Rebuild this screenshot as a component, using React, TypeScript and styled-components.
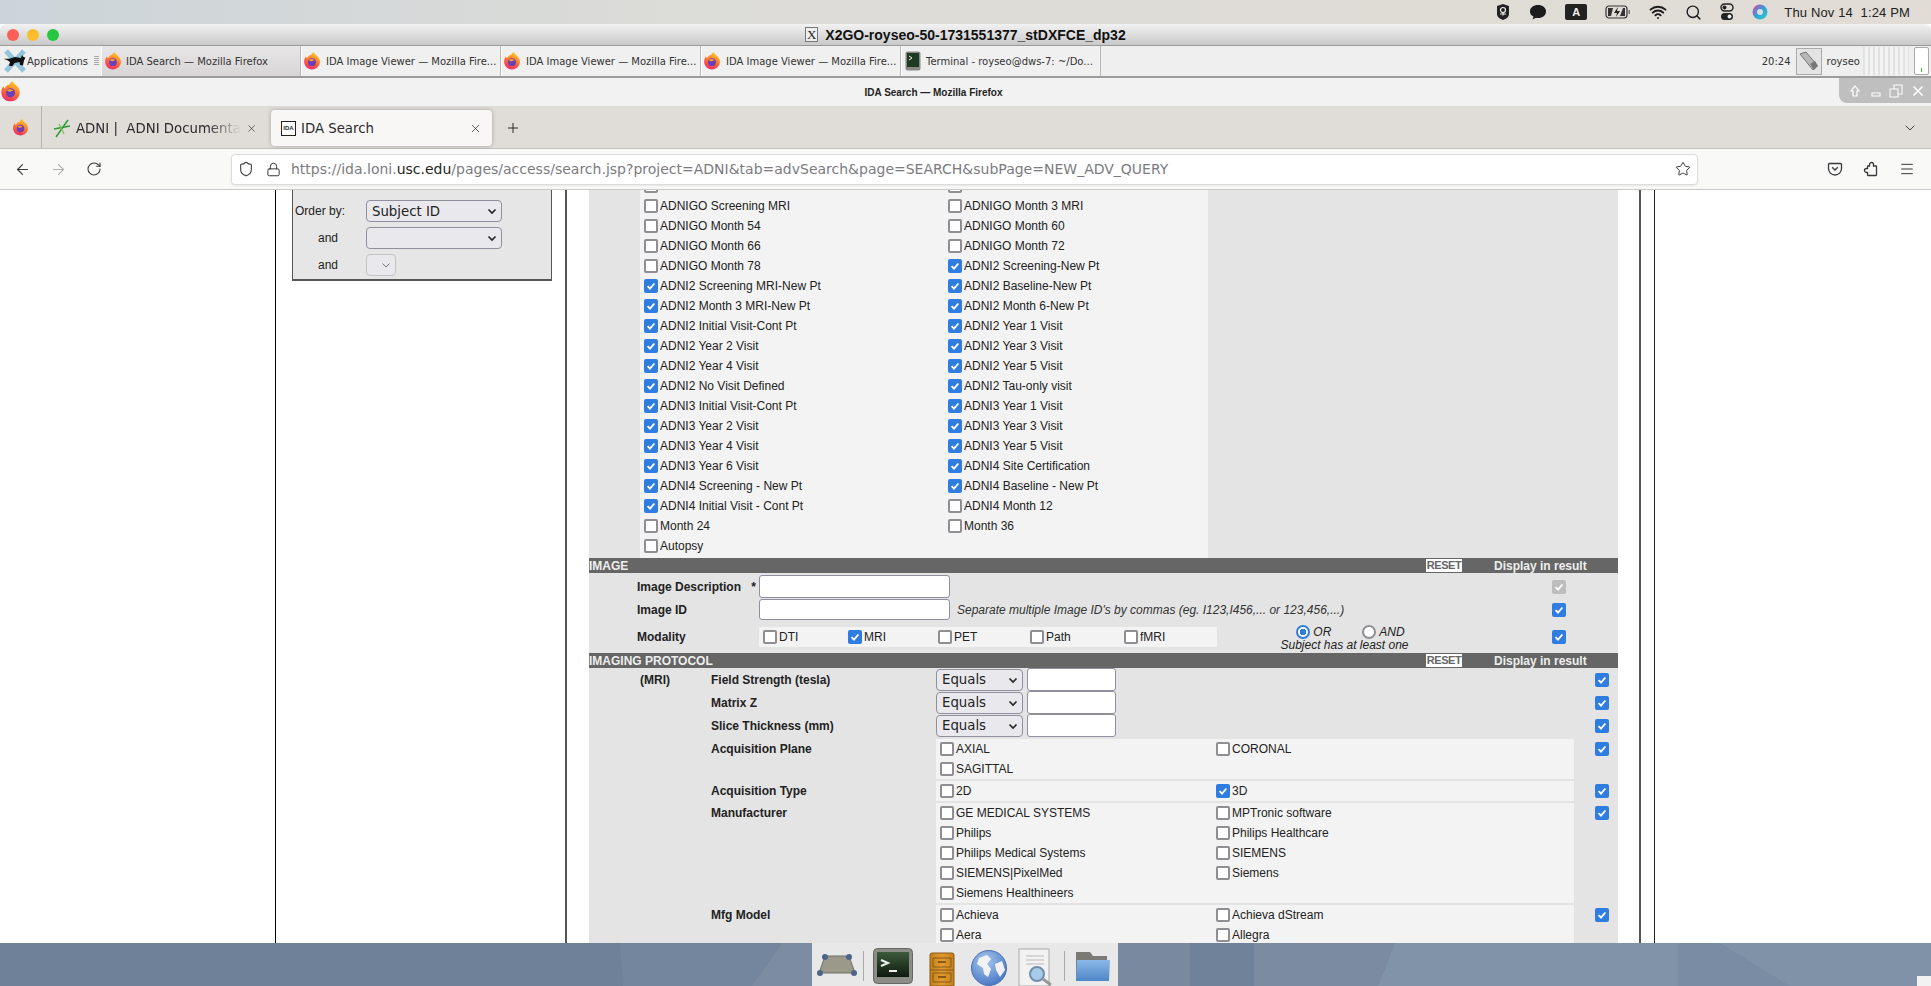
import React from 'react'
import styled, { createGlobalStyle } from 'styled-components'
import { ArrowLeft, ArrowRight, ChevronDown, Lock, Menu, Plus, RotateCw, Search, Shield, Star, Wifi, X } from 'lucide-react'

const GlobalStyle = createGlobalStyle`
  html, body {
    margin: 0;
    padding: 0;
    background: #fff;
    overflow: hidden;
  }
  * {
    box-sizing: border-box;
  }
`

const Screen = styled.div`
  width: 1931px;
  height: 986px;
  display: flex;
  flex-direction: column;
  overflow: hidden;
  font-family: 'Liberation Sans', Arial, sans-serif;
  font-size: 12px;
  color: #222;
`

/* mac menu bar */
const MacBar = styled.div`
  height: 24px;
  flex: none;
  display: flex;
  align-items: center;
  justify-content: flex-end;
  padding-right: 21px;
  background: linear-gradient(90deg, #ccd4d9 0%, #dcdcd8 35%, #e1dcd5 100%);
  color: #222;
  font-family: 'Liberation Sans', sans-serif;
  font-size: 13px;
  letter-spacing: 0.15px;
`

const MacIcons = styled.div`
  display: flex;
  align-items: center;
  gap: 18px;
  margin-right: 16px;
  color: #1c1c1c;
`

const KeyBadge = styled.span`
  width: 22px;
  height: 16px;
  border-radius: 2px;
  background: #222;
  color: #eee;
  font-size: 11px;
  font-weight: bold;
  display: flex;
  align-items: center;
  justify-content: center;
`

/* x2go window title */
const X2goTitle = styled.div`
  height: 21px;
  flex: none;
  display: flex;
  align-items: center;
  position: relative;
  justify-content: center;
  gap: 7px;
  background: linear-gradient(#f2f2f2, #c9c9c9);
  border-top-left-radius: 6px;
  border-top-right-radius: 6px;
  font-weight: bold;
  font-size: 14px;
  color: #111;
`

const Lights = styled.div`
  position: absolute;
  left: 7px;
  top: 5px;
  display: flex;
  gap: 8px;
`

const Light = styled.span<{ $c: string }>`
  width: 12px;
  height: 12px;
  border-radius: 50%;
  background: ${p => p.$c};
`

const XBadge = styled.span`
  width: 13px;
  height: 15px;
  background: #eee;
  border: 1px solid #777;
  font-family: 'Liberation Serif', serif;
  font-weight: normal;
  font-size: 13px;
  line-height: 13px;
  text-align: center;
  color: #222;
`

/* xfce panel */
const Panel = styled.div`
  height: 33px;
  flex: none;
  display: flex;
  align-items: stretch;
  background: #efefef;
  border-top: 1px solid #9a9a9a;
  border-bottom: 2px solid #9c9c9c;
  font-family: 'DejaVu Sans', sans-serif;
  font-size: 10px;
  color: #333;
`

const AppsButton = styled.div`
  width: 101px;
  display: flex;
  align-items: center;
  gap: 0;
  padding-left: 3px;
  position: relative;
`

const AppsHandle = styled.span`
  position: absolute;
  right: 2px;
  top: 10px;
  width: 5px;
  height: 10px;
  background: repeating-linear-gradient(#aaa 0 1px, transparent 1px 2px);
`

const WinTab = styled.div<{ $active?: boolean; $w?: number }>`
  width: ${p => p.$w ?? 200}px;
  display: flex;
  align-items: center;
  gap: ${p => (p.$active ? 4 : 5)}px;
  padding-left: ${p => (p.$active ? 2 : 1)}px;
  white-space: nowrap;
  overflow: hidden;
  border-right: 1px solid #b9b9b9;
  border-left: 1px solid #fff;
  background: ${p => (p.$active ? 'linear-gradient(#e8e6e6, #d7d5d5)' : '#f0f0f0')};
`

const PanelRight = styled.div`
  margin-left: auto;
  display: flex;
  align-items: center;
  gap: 5px;
  padding-right: 2px;
`

const Hatch = styled.div`
  width: 46px;
  height: 28px;
  margin-left: -2px;
  background: repeating-linear-gradient(90deg, #e2e2e2 0 2px, #f3f3f3 2px 5px);
`

const Meter = styled.div`
  width: 15px;
  height: 28px;
  background: #fff;
  border: 1px solid #aaa;
  border-radius: 2px;
  display: flex;
  align-items: flex-end;
  justify-content: center;
  padding-bottom: 2px;
  &::after {
    content: '';
    width: 1px;
    height: 4px;
    background: #22d822;
  }
`

const NetIcon = styled.div`
  width: 26px;
  height: 27px;
  border: 1px solid #aaa;
  display: flex;
  align-items: center;
  justify-content: center;
  background: #e4e4e4;
`

/* firefox window */
const FoxTitle = styled.div`
  height: 28px;
  flex: none;
  position: relative;
  display: flex;
  align-items: center;
  justify-content: center;
  background: #f2f2f2;
  font-size: 10px;
  font-weight: bold;
  color: #222;
  padding-right: 64px;
`

const FoxTitleIcon = styled.div`
  position: absolute;
  left: 0;
  top: 3px;
`

const WinButtons = styled.div`
  position: absolute;
  right: 0;
  top: 0;
  width: 92px;
  height: 25px;
  display: flex;
  align-items: center;
  justify-content: space-around;
  padding: 0 2px 0 6px;
  background: #bfbfbf;
  border-bottom-left-radius: 8px;
  color: #fff;
`

const TabStrip = styled.div`
  height: 43px;
  flex: none;
  display: flex;
  align-items: center;
  padding-top: 2px;
  background: #e0ddd8;
  border-bottom: 1px solid #c4c2be;
  font-family: 'DejaVu Sans', sans-serif;
  font-size: 13.3px;
  color: #2a2a2e;
`

const FoxButton = styled.div`
  width: 42px;
  align-self: stretch;
  margin-top: -2px;
  display: flex;
  align-items: center;
  justify-content: center;
  border-right: 1px solid #b4b2ae;
`

const BrowserTab = styled.div<{ $active?: boolean; $first?: boolean }>`
  width: ${p => (p.$first ? 220 : 221)}px;
  height: 36px;
  flex: none;
  display: flex;
  align-items: center;
  gap: 5px;
  padding: ${p => (p.$first ? '0 6px 0 10px' : '0 10px')};
  margin-left: ${p => (p.$first ? 1 : 8)}px;
  border-radius: 4px;
  white-space: nowrap;
  overflow: hidden;
  background: ${p => (p.$active ? '#f8f7f5' : 'transparent')};
  box-shadow: ${p => (p.$active ? '0 0 4px rgba(0,0,0,.25)' : 'none')};
`

const FadedTitle = styled.span`
  flex: 1;
  white-space: nowrap;
  mask-image: linear-gradient(90deg, #000 80%, transparent 100%);
`

const TabTitle = styled.span`
  flex: 1;
`

const IdaIcon = styled.span`
  width: 15px;
  height: 15px;
  background: #fff;
  border: 1px solid #222;
  font-family: 'Liberation Sans', sans-serif;
  font-size: 6px;
  font-weight: bold;
  display: flex;
  align-items: center;
  justify-content: center;
  flex: none;
`

const NewTab = styled.div`
  margin-left: 13px;
  display: flex;
`

const StripEnd = styled.div`
  margin-left: auto;
  padding-right: 13px;
  display: flex;
`

const NavBar = styled.div`
  height: 41px;
  flex: none;
  display: flex;
  align-items: center;
  background: #f9f9f8;
  border-bottom: 1px solid #c9c9c9;
  color: #3a3a3e;
`

const NavButtons = styled.div`
  width: 231px;
  display: flex;
  gap: 19px;
  padding-left: 14px;
`

const UrlField = styled.div`
  width: 1467px;
  height: 31px;
  display: flex;
  align-items: center;
  gap: 12px;
  background: #fff;
  border: 1px solid #dcdcdc;
  border-radius: 4px;
  box-shadow: 0 1px 2px rgba(0, 0, 0, 0.08);
  padding: 0 6px 0 6px;
`

const UrlText = styled.span`
  flex: 1;
  margin-left: -2px;
  font-family: 'DejaVu Sans', sans-serif;
  font-size: 14px;
  color: #7b7b7f;
  white-space: nowrap;
  overflow: hidden;
`

const UrlDomain = styled.span`
  color: #1f1f22;
`

const NavRight = styled.div`
  margin-left: auto;
  display: flex;
  gap: 20px;
  padding-right: 16px;
`

/* page */
const Viewport = styled.div`
  flex: 1;
  min-height: 0;
  overflow: hidden;
  display: flex;
  padding-left: 275px;
  background: #fff;
`

const SideColumn = styled.div`
  width: 292px;
  flex: none;
  border-left: 1px solid #000;
  border-right: 2px solid #555;
  padding-left: 16px;
`

const OrderPanel = styled.div`
  width: 260px;
  height: 91px;
  background: #e6e6e6;
  border-left: 1px solid #555;
  border-right: 1px solid #555;
  border-bottom: 2px solid #555;
  display: grid;
  grid-template-columns: 73px 1fr;
  align-content: start;
  row-gap: 5px;
  padding-top: 10px;
`

const OrderLabel = styled.div<{ $indent?: boolean }>`
  display: flex;
  align-items: center;
  padding-left: ${p => (p.$indent ? 25 : 2)}px;
  color: #222;
`

const Select = styled.div<{ $w: number; $disabled?: boolean }>`
  width: ${p => p.$w}px;
  height: 22px;
  display: flex;
  align-items: center;
  justify-content: space-between;
  padding: 0 4px 0 5px;
  background: #e9e9ed;
  border: 1px solid ${p => (p.$disabled ? '#c4c4c8' : '#8f8f9d')};
  border-radius: 4px;
  font-family: 'DejaVu Sans', sans-serif;
  font-size: 13.3px;
  color: ${p => (p.$disabled ? '#888' : '#222')};
`

const MainGray = styled.div`
  width: 1029px;
  flex: none;
  margin-left: 22px;
  background: #e4e4e4;
`

const OuterRule = styled.div`
  width: 16px;
  flex: none;
  margin-left: 21px;
  border-left: 2px solid #555;
  border-right: 1px solid #222;
`

const VisitGrid = styled.div`
  margin-left: 51px;
  width: 568px;
  margin-top: -14px;
  background: #f3f3f3;
  display: grid;
  grid-template-columns: 304px 1fr;
  grid-auto-rows: 20px;
  padding-bottom: 2px;
`

const Check = styled.label<{ $pad?: number }>`
  display: flex;
  align-items: center;
  gap: 2px;
  padding-left: ${p => p.$pad ?? 4}px;
  white-space: nowrap;
  color: #222;
`

const Box = styled.span<{ $on?: boolean; $dim?: boolean }>`
  width: 14px;
  height: 14px;
  flex: none;
  display: flex;
  align-items: center;
  justify-content: center;
  border-radius: 2px;
  border: ${p => (p.$on || p.$dim ? 'none' : '2px solid #8f8f93')};
  background: ${p => (p.$dim ? '#bdbdbd' : p.$on ? '#2f7de1' : '#fff')};
`

const SectionBar = styled.div`
  height: 15px;
  display: flex;
  align-items: center;
  background: #666;
  color: #eee;
  font-weight: bold;
  font-size: 12px;
  position: relative;
`

const SectionName = styled.span`
  flex: 1;
`

const ResetButton = styled.span`
  width: 36px;
  height: 13px;
  margin-right: 32px;
  background: #fff;
  color: #666;
  font-size: 11px;
  font-weight: bold;
  line-height: 13px;
  text-align: center;
  letter-spacing: -0.4px;
`

const DisplayLabel = styled.span`
  width: 124px;
`

const ImageRow = styled.div<{ $h: number; $pt?: number }>`
  height: ${p => p.$h}px;
  padding-top: ${p => p.$pt ?? 0}px;
  display: grid;
  grid-template-columns: 48px 122px 191px 602px 1fr;
  align-items: center;
`

const FieldLabel = styled.span`
  font-weight: bold;
  color: #222;
  white-space: nowrap;
  display: flex;
  justify-content: space-between;
  padding-right: 3px;
`

const TextInput = styled.div<{ $w?: number; $h?: number }>`
  width: ${p => p.$w ?? 191}px;
  height: ${p => p.$h ?? 23}px;
  background: #fff;
  border: 1px solid #8f8f9d;
  border-radius: 3px;
`

const Hint = styled.span`
  font-style: italic;
  padding-left: 7px;
  color: #333;
`

const ModalityStrip = styled.div`
  grid-column: 3 / span 2;
  display: flex;
  align-items: stretch;
  height: 100%;
`

const ModalityBoxes = styled.div`
  width: 458px;
  height: 20px;
  margin-top: 7px;
  background: #f3f3f3;
  display: flex;
`

const ModalityItem = styled.div<{ $w: number }>`
  width: ${p => p.$w}px;
  display: flex;
`

const Logic = styled.div`
  margin-left: 60px;
  width: 135px;
  text-align: center;
  font-style: italic;
  color: #222;
  line-height: 13px;
  padding-top: 5px;
`

const RadioRow = styled.div`
  display: flex;
  justify-content: center;
  gap: 31px;
  padding-left: 12px;
`

const RadioItem = styled.span`
  display: flex;
  align-items: center;
  gap: 3px;
`

const Radio = styled.span<{ $on?: boolean }>`
  width: 14px;
  height: 14px;
  border-radius: 50%;
  background: ${p => (p.$on ? '#2f7de1' : '#8f8f93')};
  padding: 2px;
  display: flex;
  &::after {
    content: '';
    flex: 1;
    border-radius: 50%;
    background: ${p => (p.$on ? 'radial-gradient(#2f7de1 0 3px, #fff 3.5px)' : '#fff')};
  }
`

const CheckCell = styled.div`
  display: flex;
`

const ProtoRow = styled.div<{ $h: number; $gap?: number }>`
  height: ${p => p.$h}px;
  margin-top: ${p => p.$gap ?? 0}px;
  display: grid;
  grid-template-columns: 51px 71px 225px 638px 1fr;
`

const ProtoLabel = styled.div<{ $h?: number }>`
  height: ${p => p.$h ?? 20}px;
  display: flex;
  align-items: center;
  font-weight: bold;
`

const SelectPair = styled.div`
  display: flex;
  gap: 4px;
  align-items: center;
`

const OptionGrid = styled.div`
  background: #f3f3f3;
  display: grid;
  grid-template-columns: 276px 1fr;
  grid-auto-rows: 20px;
`

const RightCheck = styled.div<{ $h?: number }>`
  height: ${p => p.$h ?? 20}px;
  display: flex;
  align-items: center;
  padding-left: 21px;
`

/* dock */
const DockArea = styled.div`
  height: 43px;
  flex: none;
  position: relative;
  display: flex;
  justify-content: center;
  background: #6e8199;
  overflow: hidden;
`

const Wallpaper = styled.svg`
  position: absolute;
  inset: 0;
`

const ResizeGrip = styled.span`
  position: absolute;
  right: 0;
  bottom: 0;
  width: 14px;
  height: 10px;
  background: #f2f2f2;
`

const Dock = styled.div`
  position: relative;
  width: 306px;
  margin-left: -1px;
  display: flex;
  align-items: stretch;
  background: #e8e8e8;
  padding-left: 5px;
`

const DockItem = styled.div<{ $w: number; $b?: number }>`
  width: ${p => p.$w}px;
  height: 100%;
  display: flex;
  align-items: flex-end;
  justify-content: center;
  padding-bottom: ${p => p.$b ?? 0}px;
`

const DockSep = styled.span<{ $l: number; $r: number }>`
  width: 1px;
  height: 30px;
  margin: 0 ${p => p.$r}px 5px ${p => p.$l}px;
  background: #aaa;
  flex: none;
  align-self: flex-end;
`

const Fox: React.FC<{ size?: number }> = ({ size = 16 }) => (
  <svg width={size} height={size} viewBox="0 0 32 32" style={{ flex: 'none' }}>
    <defs>
      <linearGradient id="foxGrad" x1="0.7" y1="0" x2="0.3" y2="1">
        <stop offset="0" stopColor="#ffd02c" />
        <stop offset="0.45" stopColor="#ff7a2a" />
        <stop offset="1" stopColor="#ee2a6a" />
      </linearGradient>
    </defs>
    <path d="M16 31C7.500 31 2 24.500 2 17c0-4 1.500-7.500 3.500-9.500 0 2 .8 3.300 1.800 3.800C8.500 7.500 12 5.500 15 5c-.5-1.500 1-4 5-4.500-.5 2 2 4 4.500 6C28 9.500 30 13 30 17c0 8-6 14-14 14z" fill="url(#foxGrad)" />
    <circle cx="16" cy="18" r="7" fill="#6b3fb5" />
    <path d="M10 14c3-2 8-2 11 1-2-.5-3.500 0-4 1-1 .5-4 .5-7-2z" fill="#ff9a3a" />
  </svg>
)

const Tick: React.FC = () => (
  <svg width="10" height="10" viewBox="0 0 10 10">
    <path d="M1.600 5.200 4 7.700l4.400-5.200" fill="none" stroke="#fff" strokeWidth="1.800" />
  </svg>
)

const CheckBox: React.FC<{ on?: boolean; dim?: boolean }> = ({ on, dim }) => (
  <Box $on={on} $dim={dim}>{(on || dim) && <Tick />}</Box>
)

const Option: React.FC<{ label: string; on?: boolean; pad?: number }> = ({ label, on, pad }) => (
  <Check $pad={pad}>
    <CheckBox on={on} />
    {label}
  </Check>
)

const Chevron: React.FC<{ light?: boolean }> = ({ light }) => (
  <svg width="10" height="10" viewBox="0 0 10 10">
    <path d="M1.500 3.500 5 7l3.500-3.500" fill="none" stroke={light ? '#777' : '#222'} strokeWidth={light ? 1 : 1.600} />
  </svg>
)

const Pocket: React.FC = () => (
  <svg width="16" height="16" viewBox="0 0 16 16" fill="none" stroke="currentColor" strokeWidth="1.300">
    <path d="M2.500 2.500h11a1 1 0 0 1 1 1v4a6.500 6.500 0 0 1-13 0v-4a1 1 0 0 1 1-1z" />
    <path d="M5.200 6.300 8 9l2.800-2.700" />
  </svg>
)

const Extension: React.FC = () => (
  <svg width="16" height="16" viewBox="0 0 16 16" fill="none" stroke="currentColor" strokeWidth="1.300">
    <path d="M6.500 5V3.500a2 2 0 0 1 4 0V5H13a.5.5 0 0 1 .5.5V14a.5.5 0 0 1-.5.5H5a.5.5 0 0 1-.5-.5v-2.500h-1a2 2 0 0 1 0-4h1V5.500A.5.5 0 0 1 5 5z" />
  </svg>
)

const visits: [string, boolean][] = [
  ['', false], ['', false],
  ['ADNIGO Screening MRI', false], ['ADNIGO Month 3 MRI', false],
  ['ADNIGO Month 54', false], ['ADNIGO Month 60', false],
  ['ADNIGO Month 66', false], ['ADNIGO Month 72', false],
  ['ADNIGO Month 78', false], ['ADNI2 Screening-New Pt', true],
  ['ADNI2 Screening MRI-New Pt', true], ['ADNI2 Baseline-New Pt', true],
  ['ADNI2 Month 3 MRI-New Pt', true], ['ADNI2 Month 6-New Pt', true],
  ['ADNI2 Initial Visit-Cont Pt', true], ['ADNI2 Year 1 Visit', true],
  ['ADNI2 Year 2 Visit', true], ['ADNI2 Year 3 Visit', true],
  ['ADNI2 Year 4 Visit', true], ['ADNI2 Year 5 Visit', true],
  ['ADNI2 No Visit Defined', true], ['ADNI2 Tau-only visit', true],
  ['ADNI3 Initial Visit-Cont Pt', true], ['ADNI3 Year 1 Visit', true],
  ['ADNI3 Year 2 Visit', true], ['ADNI3 Year 3 Visit', true],
  ['ADNI3 Year 4 Visit', true], ['ADNI3 Year 5 Visit', true],
  ['ADNI3 Year 6 Visit', true], ['ADNI4 Site Certification', true],
  ['ADNI4 Screening - New Pt', true], ['ADNI4 Baseline - New Pt', true],
  ['ADNI4 Initial Visit - Cont Pt', true], ['ADNI4 Month 12', false],
  ['Month 24', false], ['Month 36', false],
  ['Autopsy', false],
]

const modalities: [string, number, boolean][] = [
  ['DTI', 85, false], ['MRI', 90, true], ['PET', 92, false], ['Path', 94, false], ['fMRI', 90, false],
]

const App: React.FC = () => {
  return (
    <Screen>
      <GlobalStyle />
      <MacBar>
        <MacIcons>
          <svg width="16" height="18" viewBox="0 0 16 18">
            <path d="M8 1l6 2v8c0 3-3 5-6 6-3-1-6-3-6-6V3z" fill="#222" />
            <circle cx="8" cy="7" r="2.500" fill="none" stroke="#eee" strokeWidth="1.200" />
            <path d="M5 11h6M8 9.500v3" stroke="#eee" strokeWidth="1.200" />
          </svg>
          <svg width="18" height="18" viewBox="0 0 18 18">
            <path d="M9 2c4.500 0 8 2.500 8 6.500S13.500 15 9 15c-.8 0-1.500 0-2-.2L3.500 16.500 4.500 13.500C2 12.500 1 10.500 1 8.500 1 4.500 4.500 2 9 2z" fill="#1c1c1c" />
          </svg>
          <KeyBadge>A</KeyBadge>
          <svg width="26" height="14" viewBox="0 0 26 14">
            <rect x="1" y="1" width="21" height="12" rx="3" fill="none" stroke="#333" strokeWidth="1.200" />
            <path d="M3 3h5l-2 8H3zM18 3h2v8h-5z" fill="#333" />
            <path d="M13 2 9 8h3l-1 4 4-6h-3z" fill="#222" />
            <rect x="23.500" y="5" width="1.500" height="4" fill="#777" />
          </svg>
          <Wifi size={18} strokeWidth={2.600} />
          <Search size={17} strokeWidth={2} />
          <svg width="14" height="18" viewBox="0 0 14 18">
            <rect x="1" y="1" width="12" height="7" rx="3.500" fill="none" stroke="#222" strokeWidth="1.400" />
            <circle cx="4.500" cy="4.500" r="2" fill="#222" />
            <rect x="1" y="10" width="12" height="7" rx="3.500" fill="#222" />
            <circle cx="9.500" cy="13.500" r="2" fill="#eee" />
          </svg>
          <svg width="16" height="16" viewBox="0 0 16 16">
            <defs>
              <linearGradient id="siriGrad" x1="0" y1="0" x2="1" y2="1">
                <stop offset="0" stopColor="#e0409a" />
                <stop offset="0.5" stopColor="#30a0e0" />
                <stop offset="1" stopColor="#30d0c0" />
              </linearGradient>
            </defs>
            <circle cx="8" cy="8" r="7.500" fill="url(#siriGrad)" />
            <circle cx="8" cy="8" r="3" fill="#ddd" />
          </svg>
        </MacIcons>
        <span>Thu Nov 14&nbsp;&nbsp;1:24 PM</span>
      </MacBar>

      <X2goTitle>
        <Lights>
          <Light $c="#fb5f57" />
          <Light $c="#fcbc2e" />
          <Light $c="#29c73f" />
        </Lights>
        <XBadge>X</XBadge>
        X2GO-royseo-50-1731551377_stDXFCE_dp32
      </X2goTitle>

      <Panel>
        <AppsButton>
          <svg width="24" height="26" viewBox="0 0 24 26" style={{ flex: 'none' }}>
            <path d="M3 3l18 20M21 3 3 23" stroke="#94c4dc" strokeWidth="5" />
            <path d="M1 11c2-1 4 .5 6-.5l5-1.500 6 1 1-3 1.500 2 2 .5-1.500 3-1 5-3-.5-.5-3-5 1-2 3H6l1-4-3-2z" fill="#111" />
          </svg>
          Applications
          <AppsHandle />
        </AppsButton>
        <WinTab $active>
          <Fox size={18} />
          IDA Search — Mozilla Firefox
        </WinTab>
        <WinTab>
          <Fox size={18} />
          IDA Image Viewer — Mozilla Fire...
        </WinTab>
        <WinTab>
          <Fox size={18} />
          IDA Image Viewer — Mozilla Fire...
        </WinTab>
        <WinTab>
          <Fox size={18} />
          IDA Image Viewer — Mozilla Fire...
        </WinTab>
        <WinTab>
          <svg width="16" height="20" viewBox="0 0 16 20" style={{ marginLeft: 2 }}>
            <rect x="0.500" y="0.500" width="15" height="19" rx="2" fill="#8a8a85" />
            <rect x="2" y="2" width="12" height="14" fill="#1f3a22" />
            <path d="M4 5l3 2-3 2" fill="none" stroke="#eee" strokeWidth="1" />
          </svg>
          Terminal - royseo@dws-7: ~/Do...
        </WinTab>
        <PanelRight>
          20:24
          <NetIcon>
            <svg width="22" height="22" viewBox="0 0 22 22">
              <path d="M2 4l6-2 11 13-4 5z" fill="#b8b8b8" stroke="#777" />
              <path d="M12 14l5-3 3 5-4 4z" fill="#777" />
            </svg>
          </NetIcon>
          royseo
          <Hatch />
          <Meter />
        </PanelRight>
      </Panel>

      <FoxTitle>
        <FoxTitleIcon>
          <Fox size={21} />
        </FoxTitleIcon>
        IDA Search — Mozilla Firefox
        <WinButtons>
          <svg width="14" height="14" viewBox="0 0 14 14">
            <path d="M7 2 11 7H9v5H5V7H3z" fill="none" stroke="#fff" strokeWidth="1.200" />
          </svg>
          <svg width="14" height="14" viewBox="0 0 14 14">
            <rect x="3" y="9" width="8" height="3" fill="none" stroke="#fff" />
          </svg>
          <svg width="14" height="14" viewBox="0 0 14 14">
            <rect x="5" y="1" width="8" height="9" fill="none" stroke="#fff" />
            <rect x="1" y="5" width="8" height="8" fill="#bfbfbf" stroke="#fff" />
          </svg>
          <X size={16} strokeWidth={2.500} />
        </WinButtons>
      </FoxTitle>

      <TabStrip>
        <FoxButton>
          <Fox size={17} />
        </FoxButton>
        <BrowserTab $first>
          <svg width="18" height="20" viewBox="0 0 18 20" style={{ flex: 'none' }}>
            <path d="M15 2 3 19" stroke="#2f9a3a" strokeWidth="1.500" />
            <path d="M1 11l16-3" stroke="#2f9a3a" strokeWidth="1.500" />
            <path d="M6 6l5 10" stroke="#7cc24c" strokeWidth="1.200" />
          </svg>
          <FadedTitle>ADNI |&nbsp; ADNI Documenta</FadedTitle>
          <X size={13} strokeWidth={1.400} />
        </BrowserTab>
        <BrowserTab $active>
          <IdaIcon>IDA</IdaIcon>
          <TabTitle>IDA Search</TabTitle>
          <X size={13} strokeWidth={1.400} />
        </BrowserTab>
        <NewTab>
          <Plus size={16} strokeWidth={1.500} />
        </NewTab>
        <StripEnd>
          <ChevronDown size={16} strokeWidth={1.300} />
        </StripEnd>
      </TabStrip>

      <NavBar>
        <NavButtons>
          <ArrowLeft size={17} strokeWidth={1.600} />
          <ArrowRight size={17} strokeWidth={1.600} color="#b0b0b0" />
          <RotateCw size={16} strokeWidth={1.600} />
        </NavButtons>
        <UrlField>
          <Shield size={16} strokeWidth={1.600} />
          <Lock size={15} strokeWidth={1.600} />
          <UrlText>
            https://ida.loni.<UrlDomain>usc.edu</UrlDomain>/pages/access/search.jsp?project=ADNI&amp;tab=advSearch&amp;page=SEARCH&amp;subPage=NEW_ADV_QUERY
          </UrlText>
          <Star size={16} strokeWidth={1.500} />
        </UrlField>
        <NavRight>
          <Pocket />
          <Extension />
          <Menu size={16} strokeWidth={1.500} />
        </NavRight>
      </NavBar>

      <Viewport>
        <SideColumn>
          <OrderPanel>
            <OrderLabel>Order by:</OrderLabel>
            <Select $w={136}>Subject ID<Chevron /></Select>
            <OrderLabel $indent>and</OrderLabel>
            <Select $w={136}><span /><Chevron /></Select>
            <OrderLabel $indent>and</OrderLabel>
            <Select $w={30} $disabled><span /><Chevron light /></Select>
          </OrderPanel>
        </SideColumn>
        <MainGray>
          <VisitGrid>
            {visits.map(([label, on], i) => (
              <Option key={i} label={label} on={on} />
            ))}
          </VisitGrid>

          <SectionBar>
            <SectionName>IMAGE</SectionName>
            <ResetButton>RESET</ResetButton>
            <DisplayLabel>Display in result</DisplayLabel>
          </SectionBar>
          <ImageRow $h={25} $pt={2}>
            <span />
            <FieldLabel>Image Description<span>*</span></FieldLabel>
            <TextInput />
            <span />
            <CheckCell><CheckBox dim /></CheckCell>
          </ImageRow>
          <ImageRow $h={22} $pt={1}>
            <span />
            <FieldLabel>Image ID</FieldLabel>
            <TextInput $h={21} />
            <Hint>Separate multiple Image ID's by commas (eg. I123,I456,... or 123,456,...)</Hint>
            <CheckCell><CheckBox on /></CheckCell>
          </ImageRow>
          <ImageRow $h={33}>
            <span />
            <FieldLabel>Modality</FieldLabel>
            <ModalityStrip>
              <ModalityBoxes>
                {modalities.map(([label, w, on]) => (
                  <ModalityItem key={label} $w={w}>
                    <Option label={label} on={on} />
                  </ModalityItem>
                ))}
              </ModalityBoxes>
              <Logic>
                <RadioRow>
                  <RadioItem><Radio $on />OR</RadioItem>
                  <RadioItem><Radio />AND</RadioItem>
                </RadioRow>
                Subject has at least one
              </Logic>
            </ModalityStrip>
            <CheckCell><CheckBox on /></CheckCell>
          </ImageRow>

          <SectionBar>
            <SectionName>IMAGING PROTOCOL</SectionName>
            <ResetButton>RESET</ResetButton>
            <DisplayLabel>Display in result</DisplayLabel>
          </SectionBar>
          {['Field Strength (tesla)', 'Matrix Z', 'Slice Thickness (mm)'].map((label, i) => (
            <ProtoRow key={label} $h={23}>
              <span />
              <ProtoLabel $h={23}>{i === 0 ? '(MRI)' : ''}</ProtoLabel>
              <ProtoLabel $h={23}>{label}</ProtoLabel>
              <SelectPair>
                <Select $w={87}>Equals<Chevron /></Select>
                <TextInput $w={89} />
              </SelectPair>
              <RightCheck $h={23}><CheckBox on /></RightCheck>
            </ProtoRow>
          ))}
          <ProtoRow $h={40} $gap={2}>
            <span />
            <span />
            <ProtoLabel>Acquisition Plane</ProtoLabel>
            <OptionGrid>
              <Option label="AXIAL" />
              <Option label="CORONAL" />
              <Option label="SAGITTAL" />
            </OptionGrid>
            <RightCheck><CheckBox on /></RightCheck>
          </ProtoRow>
          <ProtoRow $h={20} $gap={2}>
            <span />
            <span />
            <ProtoLabel>Acquisition Type</ProtoLabel>
            <OptionGrid>
              <Option label="2D" />
              <Option label="3D" on />
            </OptionGrid>
            <RightCheck><CheckBox on /></RightCheck>
          </ProtoRow>
          <ProtoRow $h={100} $gap={2}>
            <span />
            <span />
            <ProtoLabel>Manufacturer</ProtoLabel>
            <OptionGrid>
              <Option label="GE MEDICAL SYSTEMS" />
              <Option label="MPTronic software" />
              <Option label="Philips" />
              <Option label="Philips Healthcare" />
              <Option label="Philips Medical Systems" />
              <Option label="SIEMENS" />
              <Option label="SIEMENS|PixelMed" />
              <Option label="Siemens" />
              <Option label="Siemens Healthineers" />
            </OptionGrid>
            <RightCheck><CheckBox on /></RightCheck>
          </ProtoRow>
          <ProtoRow $h={40} $gap={2}>
            <span />
            <span />
            <ProtoLabel>Mfg Model</ProtoLabel>
            <OptionGrid>
              <Option label="Achieva" />
              <Option label="Achieva dStream" />
              <Option label="Aera" />
              <Option label="Allegra" />
            </OptionGrid>
            <RightCheck><CheckBox on /></RightCheck>
          </ProtoRow>
        </MainGray>
        <OuterRule />
      </Viewport>

      <DockArea>
        <Wallpaper width="1931" height="43" viewBox="0 0 1931 43">
          <path d="M620 0H812V43H623z" fill="#74869d" />
          <path d="M782 0H812V43H752z" fill="#7c8da3" />
          <path d="M1118 0H1190V43H1118z" fill="#7889a0" />
          <path d="M1190 0H1254V43H1190z" fill="#70829a" />
          <path d="M1254 0H1395L1378 43H1254z" fill="#7a8ba2" />
          <path d="M1395 0H1678V43H1378z" fill="#8193a9" />
          <path d="M1678 0H1931V43H1678z" fill="#8092a8" />
          <path d="M1678 0H1720L1790 43H1678z" fill="#7a8ca3" />
        </Wallpaper>
        <Dock>
          <DockItem $w={40} $b={9}>
            <svg width="40" height="24" viewBox="0 0 40 24">
              <path d="M8 3h24l6 17H2z" fill="#9b9a8a" stroke="#6f6f65" />
              <circle cx="8" cy="4" r="3" fill="#4f6488" />
              <circle cx="32" cy="4" r="3" fill="#4f6488" />
              <circle cx="3" cy="20" r="3" fill="#4f6488" />
              <circle cx="37" cy="20" r="3" fill="#4f6488" />
            </svg>
          </DockItem>
          <DockSep $l={6} $r={8} />
          <DockItem $w={42} $b={2}>
            <svg width="40" height="36" viewBox="0 0 40 36">
              <defs>
                <linearGradient id="termGrad" x1="0" y1="0" x2="0" y2="1">
                  <stop offset="0" stopColor="#3c5a3a" />
                  <stop offset="1" stopColor="#0f1a10" />
                </linearGradient>
              </defs>
              <rect x="0.500" y="0.500" width="39" height="35" rx="4" fill="#8d8d88" stroke="#666" />
              <rect x="4" y="4" width="32" height="25" fill="url(#termGrad)" />
              <path d="M8 12l7 3-7 3" fill="none" stroke="#eee" strokeWidth="2" />
              <path d="M16 23h8" stroke="#eee" strokeWidth="2" />
            </svg>
          </DockItem>
          <DockItem $w={56}>
            <svg width="28" height="34" viewBox="0 0 28 34">
              <defs>
                <linearGradient id="cabGrad" x1="0" y1="0" x2="1" y2="0">
                  <stop offset="0" stopColor="#c37f1a" />
                  <stop offset="0.5" stopColor="#e19b30" />
                  <stop offset="1" stopColor="#c37f1a" />
                </linearGradient>
              </defs>
              <path d="M2 3q0-2 2-2h20q2 0 2 2v31H2z" fill="url(#cabGrad)" stroke="#8a5a14" />
              <path d="M2 18h24M5 6h18v9H5zM5 21h18v9H5z" fill="none" stroke="#8a5a14" />
              <rect x="10" y="9" width="8" height="2" fill="#8a5a14" />
              <rect x="10" y="24" width="8" height="2" fill="#8a5a14" />
            </svg>
          </DockItem>
          <DockItem $w={38}>
            <svg width="36" height="37" viewBox="0 0 36 37">
              <defs>
                <radialGradient id="globeGrad" cx="0.4" cy="0.3" r="0.8">
                  <stop offset="0" stopColor="#a8c8f0" />
                  <stop offset="1" stopColor="#3f6fc0" />
                </radialGradient>
              </defs>
              <circle cx="18" cy="19" r="17.500" fill="url(#globeGrad)" stroke="#4a70b0" />
              <path d="M8 9l8-3 4 4-4 5 4 5-3 8-4-3-1-6-6-4zM24 15l7-3 3 9-5 7-4-7z" fill="#f2f2f2" />
            </svg>
          </DockItem>
          <DockItem $w={56}>
            <svg width="38" height="38" viewBox="0 0 38 38">
              <rect x="2" y="1" width="30" height="37" fill="#f2f2f2" stroke="#aaa" />
              <path d="M9 8h18M9 12h18M9 16h18" stroke="#bbb" />
              <circle cx="20" cy="26" r="7" fill="#a8cbe8" stroke="#6f8db0" strokeWidth="2" />
              <path d="M26 31l8 6" stroke="#999" strokeWidth="3" />
            </svg>
          </DockItem>
          <DockSep $l={0} $r={9} />
          <DockItem $w={38} $b={4}>
            <svg width="36" height="32" viewBox="0 0 36 32">
              <defs>
                <linearGradient id="folderGrad" x1="0" y1="0" x2="0" y2="1">
                  <stop offset="0" stopColor="#8bb8e8" />
                  <stop offset="1" stopColor="#4f86c8" />
                </linearGradient>
              </defs>
              <path d="M1 2h14l3 4h14v24H1z" fill="#7c7a74" />
              <path d="M2 10h33l-1 21H1z" fill="url(#folderGrad)" />
            </svg>
          </DockItem>
        </Dock>
        <ResizeGrip />
      </DockArea>
    </Screen>
  )
}

export default App
